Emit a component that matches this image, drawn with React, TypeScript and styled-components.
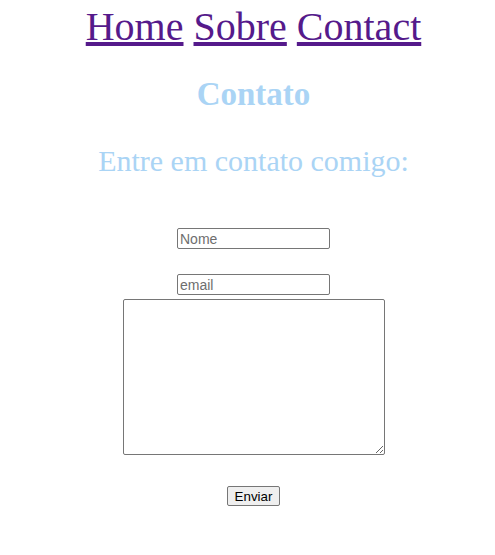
import React from "react";
import styled, { createGlobalStyle } from "styled-components";

const GlobalStyle = createGlobalStyle`
  body {
    margin: 8px 8px 8px 20px;
    font-family: "Liberation Serif", "Times New Roman", serif;
    background: #ffffff;
  }
`;

const Nav = styled.nav`
  text-align: center;
  font-size: 40px;
  line-height: 38px;

  a {
    color: #551a8b;
  }
`;

const Title = styled.h1`
  margin: 30px 0 21px;
  text-align: center;
  font-size: 33px;
  font-weight: bold;
  color: #aad4f5;
`;

const Subtitle = styled.h2`
  margin: 31px 0 26px;
  text-align: center;
  font-size: 30px;
  font-weight: normal;
  color: #aad4f5;
`;

const Form = styled.form`
  display: flex;
  flex-direction: column;
  align-items: center;
  padding-top: 24px;
`;

const Field = styled.input<{ $gap?: number }>`
  width: 153px;
  height: 21px;
  box-sizing: border-box;
  padding: 1px 2px;
  border: 1px solid #767676;
  border-radius: 2px;
  font-family: "Liberation Sans", Arial, sans-serif;
  font-size: 14px;
  margin-bottom: ${(p) => p.$gap ?? 0}px;

  &::placeholder {
    color: #6e6e6e;
  }
`;

const Message = styled.textarea`
  width: 262px;
  height: 156px;
  box-sizing: border-box;
  border: 1px solid #767676;
  border-radius: 2px;
  font-family: "Liberation Mono", monospace;
  font-size: 13.33px;
`;

const Submit = styled.button`
  margin-top: 31px;
  height: 20px;
  padding: 1px 7px;
  font-family: "Liberation Sans", Arial, sans-serif;
  font-size: 13.33px;
  color: #000;
  background: #efefef;
  border: 1px solid #767676;
  border-radius: 2px;
`;

export default function App() {
  return (
    <>
      <GlobalStyle />
      <Nav>
        <a href="#home">Home</a> <a href="#sobre">Sobre</a>{" "}
        <a href="#contact">Contact</a>
      </Nav>
      <Title>Contato</Title>
      <Subtitle>Entre em contato comigo:</Subtitle>
      <Form onSubmit={(e) => e.preventDefault()}>
        <Field type="text" placeholder="Nome" $gap={25} />
        <Field type="email" placeholder="email" $gap={4} />
        <Message />
        <Submit type="submit">Enviar</Submit>
      </Form>
    </>
  );
}
